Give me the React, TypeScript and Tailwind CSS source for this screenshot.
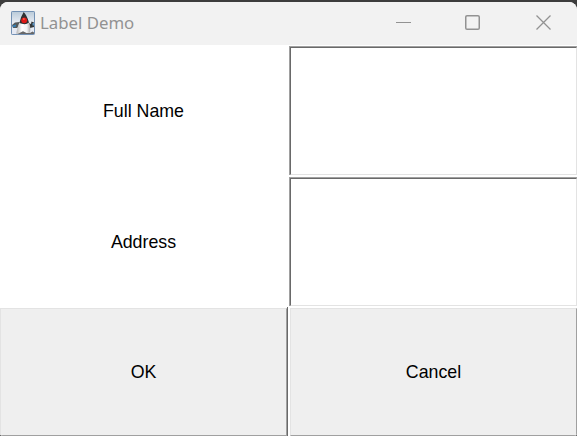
function DukeIcon() {
  return (
    <svg width="24" height="24" viewBox="0 0 24 24" className="shrink-0">
      <defs>
        <linearGradient id="sky" x1="0" y1="0" x2="0" y2="1">
          <stop offset="0" stopColor="#b9cad8" />
          <stop offset="0.5" stopColor="#e9edf4" />
          <stop offset="1" stopColor="#e4e8f3" />
        </linearGradient>
        <linearGradient id="body" x1="0" y1="0" x2="1" y2="0">
          <stop offset="0" stopColor="#b4b4b4" />
          <stop offset="0.4" stopColor="#ffffff" />
          <stop offset="0.75" stopColor="#f2f2f2" />
          <stop offset="1" stopColor="#a9a9a9" />
        </linearGradient>
      </defs>
      <rect x="0.5" y="0.5" width="23" height="23" rx="0.7" fill="url(#sky)" stroke="#7391b4" />
      <path d="M1 14 4 11.5 8.5 11 8.5 15 6 17 2 17Z" fill="#55595b" />
      <path d="M1.5 14.5 5 13.5 5 15.5 2 16.5Z" fill="#357eb2" />
      <path d="M17 11.5 20 13 20.5 10.5 23 11.5 23 16 19 17Z" fill="#333739" />
      <path d="M21.5 12H23V14.5H21.5Z" fill="#5b96c3" />
      <path d="M8.5 11.5Q6.5 15 5.3 22.5Q6.5 24 9 22L12 20.3Q15 22.5 18.5 22.5Q20.5 18 18 11Z" fill="url(#body)" />
      <path d="M6.5 23 9.5 21.5 12 20.3 15.5 22 19 22 21.5 20.5 23 21.5V23Z" fill="#686868" />
      <path d="M12.7 1Q10 5 8.4 12L11 12.7Q15 14 18 11.5Q16 4.5 12.7 1Z" fill="#2f3233" />
      <circle cx="13.2" cy="9.3" r="2.9" fill="#df1915" />
      <circle cx="12.8" cy="8.1" r="1" fill="#ff5b4c" />
    </svg>
  );
}

function TitleBar() {
  return (
    <header className="flex h-[43px] shrink-0 items-center bg-[#f2f2f2] pb-px pl-[11px] text-[#929292]">
      <DukeIcon />
      <h1 className="ml-[5px] grow whitespace-nowrap font-['Noto_Sans',sans-serif] text-[16.8px] leading-6">
        Label Demo
      </h1>
      <div className="flex h-full pr-[25px] pt-[12px]">
        <svg width="156" height="17" viewBox="0 0 156 17" fill="none" stroke="#929292">
          <path d="M0 8.5H15" />
          <rect x="69.75" y="1.75" width="13.5" height="13.5" rx="1.3" strokeWidth="1.5" />
          <path d="M140.5 1.5 154.5 15.5M154.5 1.5 140.5 15.5" strokeWidth="1.3" />
        </svg>
      </div>
    </header>
  );
}

function Label({ text }: { text: string }) {
  return <div className="flex items-center justify-center pr-[2px] pt-[2px]">{text}</div>;
}

function Field({ label }: { label: string }) {
  return (
    <div className="border-l border-t border-[#a0a0a0]">
      <input
        aria-label={label}
        className="block size-full border border-b-[#e3e3e3] border-l-[#696969] border-r-[#e3e3e3] border-t-[#696969] bg-white px-1 outline-none"
      />
    </div>
  );
}

export default function App() {
  return (
    <div className="h-[436px] w-[577px] bg-[#3d3d3d] pt-[2px] font-['Liberation_Sans',Arial,sans-serif] text-[17.8px] text-black">
      <div className="flex h-[434px] flex-col overflow-hidden rounded-b-[3px] rounded-t-[8px] bg-white">
        <TitleBar />
        <main className="grid grow grid-cols-[289px_288px] grid-rows-[129px_129px_128px] gap-y-[2px] pt-px">
          <Label text="Full Name" />
          <Field label="Full Name" />
          <Label text="Address" />
          <Field label="Address" />
          <button className="-mt-px mr-px border-r border-[#696969] pt-px">
            <span className="flex size-full items-center justify-center border border-b-[#a0a0a0] border-l-[#e3e3e3] border-r-[#a0a0a0] border-t-[#e3e3e3] bg-[#efefef]">
              OK
            </span>
          </button>
          <button className="-mt-px pl-px pt-px">
            <span className="flex size-full items-center justify-center border border-b-[#a0a0a0] border-l-[#e3e3e3] border-r-[#a0a0a0] border-t-[#e3e3e3] bg-[#efefef]">
              Cancel
            </span>
          </button>
        </main>
      </div>
    </div>
  );
}
